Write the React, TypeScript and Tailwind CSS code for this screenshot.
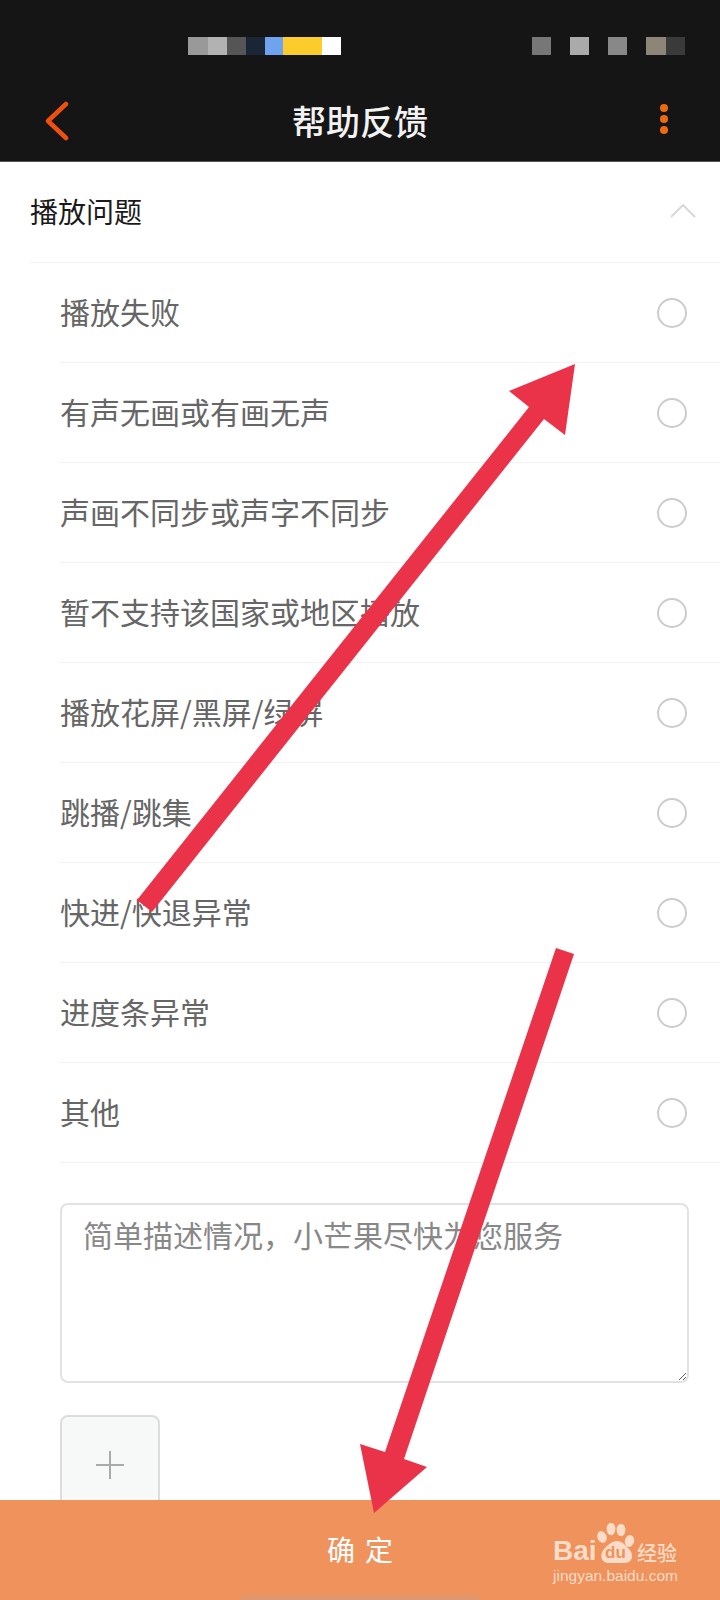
import React from 'react';

const FONT = "font-['Noto_Sans_CJK_SC','Noto_Sans',sans-serif]";

const problems = [
  '播放失败',
  '有声无画或有画无声',
  '声画不同步或声字不同步',
  '暂不支持该国家或地区播放',
  '播放花屏/黑屏/绿屏',
  '跳播/跳集',
  '快进/快退异常',
  '进度条异常',
  '其他',
];

function StatusBar() {
  return (
    <div className="flex h-[92px] items-start pt-[37px]">
      {/* pixelated carrier / notification area */}
      <div className="ml-[188px] flex h-[18px]">
        <div className="w-[20px] bg-[#999999]" />
        <div className="w-[19px] bg-[#b2b2b2]" />
        <div className="w-[19px] bg-[#555555]" />
        <div className="w-[19px] bg-[#1a2638]" />
        <div className="w-[18px] bg-[#6fa3ee]" />
        <div className="w-[39px] bg-[#fbcd2c]" />
        <div className="w-[19px] bg-white" />
      </div>
      <div className="ml-auto mr-[35px] flex h-[18px]">
        <div className="w-[19px] bg-[#777777]" />
        <div className="ml-[19px] w-[19px] bg-[#aaaaaa]" />
        <div className="ml-[19px] w-[19px] bg-[#888888]" />
        <div className="ml-[19px] w-[20px] bg-[#8c8578]" />
        <div className="w-[19px] bg-[#3a3a3a]" />
      </div>
    </div>
  );
}

function NavBar() {
  return (
    <div className="grid h-[70px] grid-cols-[1fr_auto_1fr] items-start border-b border-[#555555] pl-[44px] pr-[52px] pt-[9px]">
      <svg width="26" height="40" viewBox="0 0 26 40" fill="none">
        <path d="M22 3 L4 20 L22 37" stroke="#f0500f" strokeWidth="4.5" strokeLinecap="round" strokeLinejoin="round" />
      </svg>
      <div className="-mt-[2px] translate-x-[4px] text-[34px] leading-[44px] font-medium text-[#f2f2f2]">帮助反馈</div>
      <div className="flex flex-col gap-[3px] justify-self-end pt-[3px]">
        <div className="h-[8px] w-[8px] rounded-full bg-[#ee6a10]" />
        <div className="h-[8px] w-[8px] rounded-full bg-[#ee6a10]" />
        <div className="h-[8px] w-[8px] rounded-full bg-[#ee6a10]" />
      </div>
    </div>
  );
}

function ProblemRow({ label }: { label: string }) {
  return (
    <div className="flex h-[100px] items-center justify-between border-b border-[#f2f2f2] pr-[33px]">
      <span className="pb-[2px] text-[30px] text-[#666666]">{label}</span>
      <div className="h-[30px] w-[30px] rounded-full border-2 border-[#cccccc]" />
    </div>
  );
}

function Watermark() {
  return (
    <div className="absolute left-[553px] top-[23px] h-[60px] w-[130px] text-[#fbdcc8]">
      <span className="absolute left-0 top-[12px] font-['Liberation_Sans',sans-serif] text-[28px] leading-[32px] font-bold">Bai</span>
      <svg className="absolute left-[44px] top-0" width="38" height="41" viewBox="0 0 38 41" fill="currentColor">
        <ellipse cx="5" cy="14" rx="4.6" ry="6" transform="rotate(-20 5 14)" />
        <ellipse cx="14" cy="6" rx="4.4" ry="6.2" />
        <ellipse cx="24" cy="7" rx="4.4" ry="6.2" />
        <ellipse cx="32.5" cy="18" rx="4.6" ry="6" transform="rotate(15 32.5 18)" />
        <path d="M20 18c5 0 8 4 12 8 5 5 4 14-4 14H12c-8 0-10-8-5-14 4-4 8-8 13-8z" />
      </svg>
      <span className="absolute left-[52px] top-[20px] font-['Liberation_Sans',sans-serif] text-[17px] leading-[20px] font-bold text-[#f0925b]">du</span>
      <span className="absolute left-[84px] top-[16px] text-[20px] leading-[28px] font-medium">经验</span>
      <span className="absolute left-0 top-[44px] whitespace-nowrap font-['Liberation_Sans',sans-serif] text-[15.5px] leading-[18px]">jingyan.baidu.com</span>
    </div>
  );
}

export default function App() {
  return (
    <div className={`relative flex h-[1600px] w-[720px] flex-col overflow-hidden bg-white ${FONT}`}>
      <header className="shrink-0 bg-[#151515]">
        <StatusBar />
        <NavBar />
      </header>

      <main className="min-h-0 flex-1 overflow-hidden">
        <div className="ml-[30px] flex h-[101px] items-center justify-between border-b border-[#f2f2f2] pb-[2px] pr-[24px]">
          <span className="text-[28px] text-[#1a1a1a]">播放问题</span>
          <svg width="26" height="14" viewBox="0 0 26 14" fill="none">
            <path d="M1 13 L13 1 L25 13" stroke="#d8d8d8" strokeWidth="2" />
          </svg>
        </div>

        <div className="ml-[60px]">
          {problems.map((p) => (
            <ProblemRow key={p} label={p} />
          ))}
        </div>

        <div className="ml-[60px] mr-[31px] mt-[40px]">
          <textarea
            className="block h-[180px] w-full rounded-lg border-2 border-[#e2e2e2] px-[21px] py-[7px] text-[30px] leading-[44px] outline-none placeholder:text-[#888888]"
            placeholder="简单描述情况，小芒果尽快为您服务"
          />
          <div className="mt-[32px] flex h-[100px] w-[100px] items-center justify-center rounded-lg border-2 border-[#dddddd] bg-[#f7f8f8]">
            <svg width="28" height="28" viewBox="0 0 28 28" fill="none">
              <path d="M14 0V28M0 14H28" stroke="#aaaaaa" strokeWidth="2" />
            </svg>
          </div>
        </div>
      </main>

      <footer className="relative flex h-[100px] shrink-0 items-center justify-center bg-[#f0925b] pb-[2px]">
        <span className="pl-[10px] text-[28px] tracking-[10px] text-white">确定</span>
        <Watermark />
        <div className="absolute bottom-0 left-[241px] h-[5px] w-[238px] bg-[#e0966e]" />
      </footer>

      {/* red annotation arrows drawn over the screenshot */}
      <svg className="pointer-events-none absolute left-0 top-0" width="720" height="1600" viewBox="0 0 720 1600">
        <polygon points="137,900 529,407 509,391 575,364 565,435 544,419 152,912" fill="#ea3349" />
        <polygon points="556,948 385,1452 360,1444 374,1513 427,1467 404,1459 574,954" fill="#ea3349" />
      </svg>
    </div>
  );
}
